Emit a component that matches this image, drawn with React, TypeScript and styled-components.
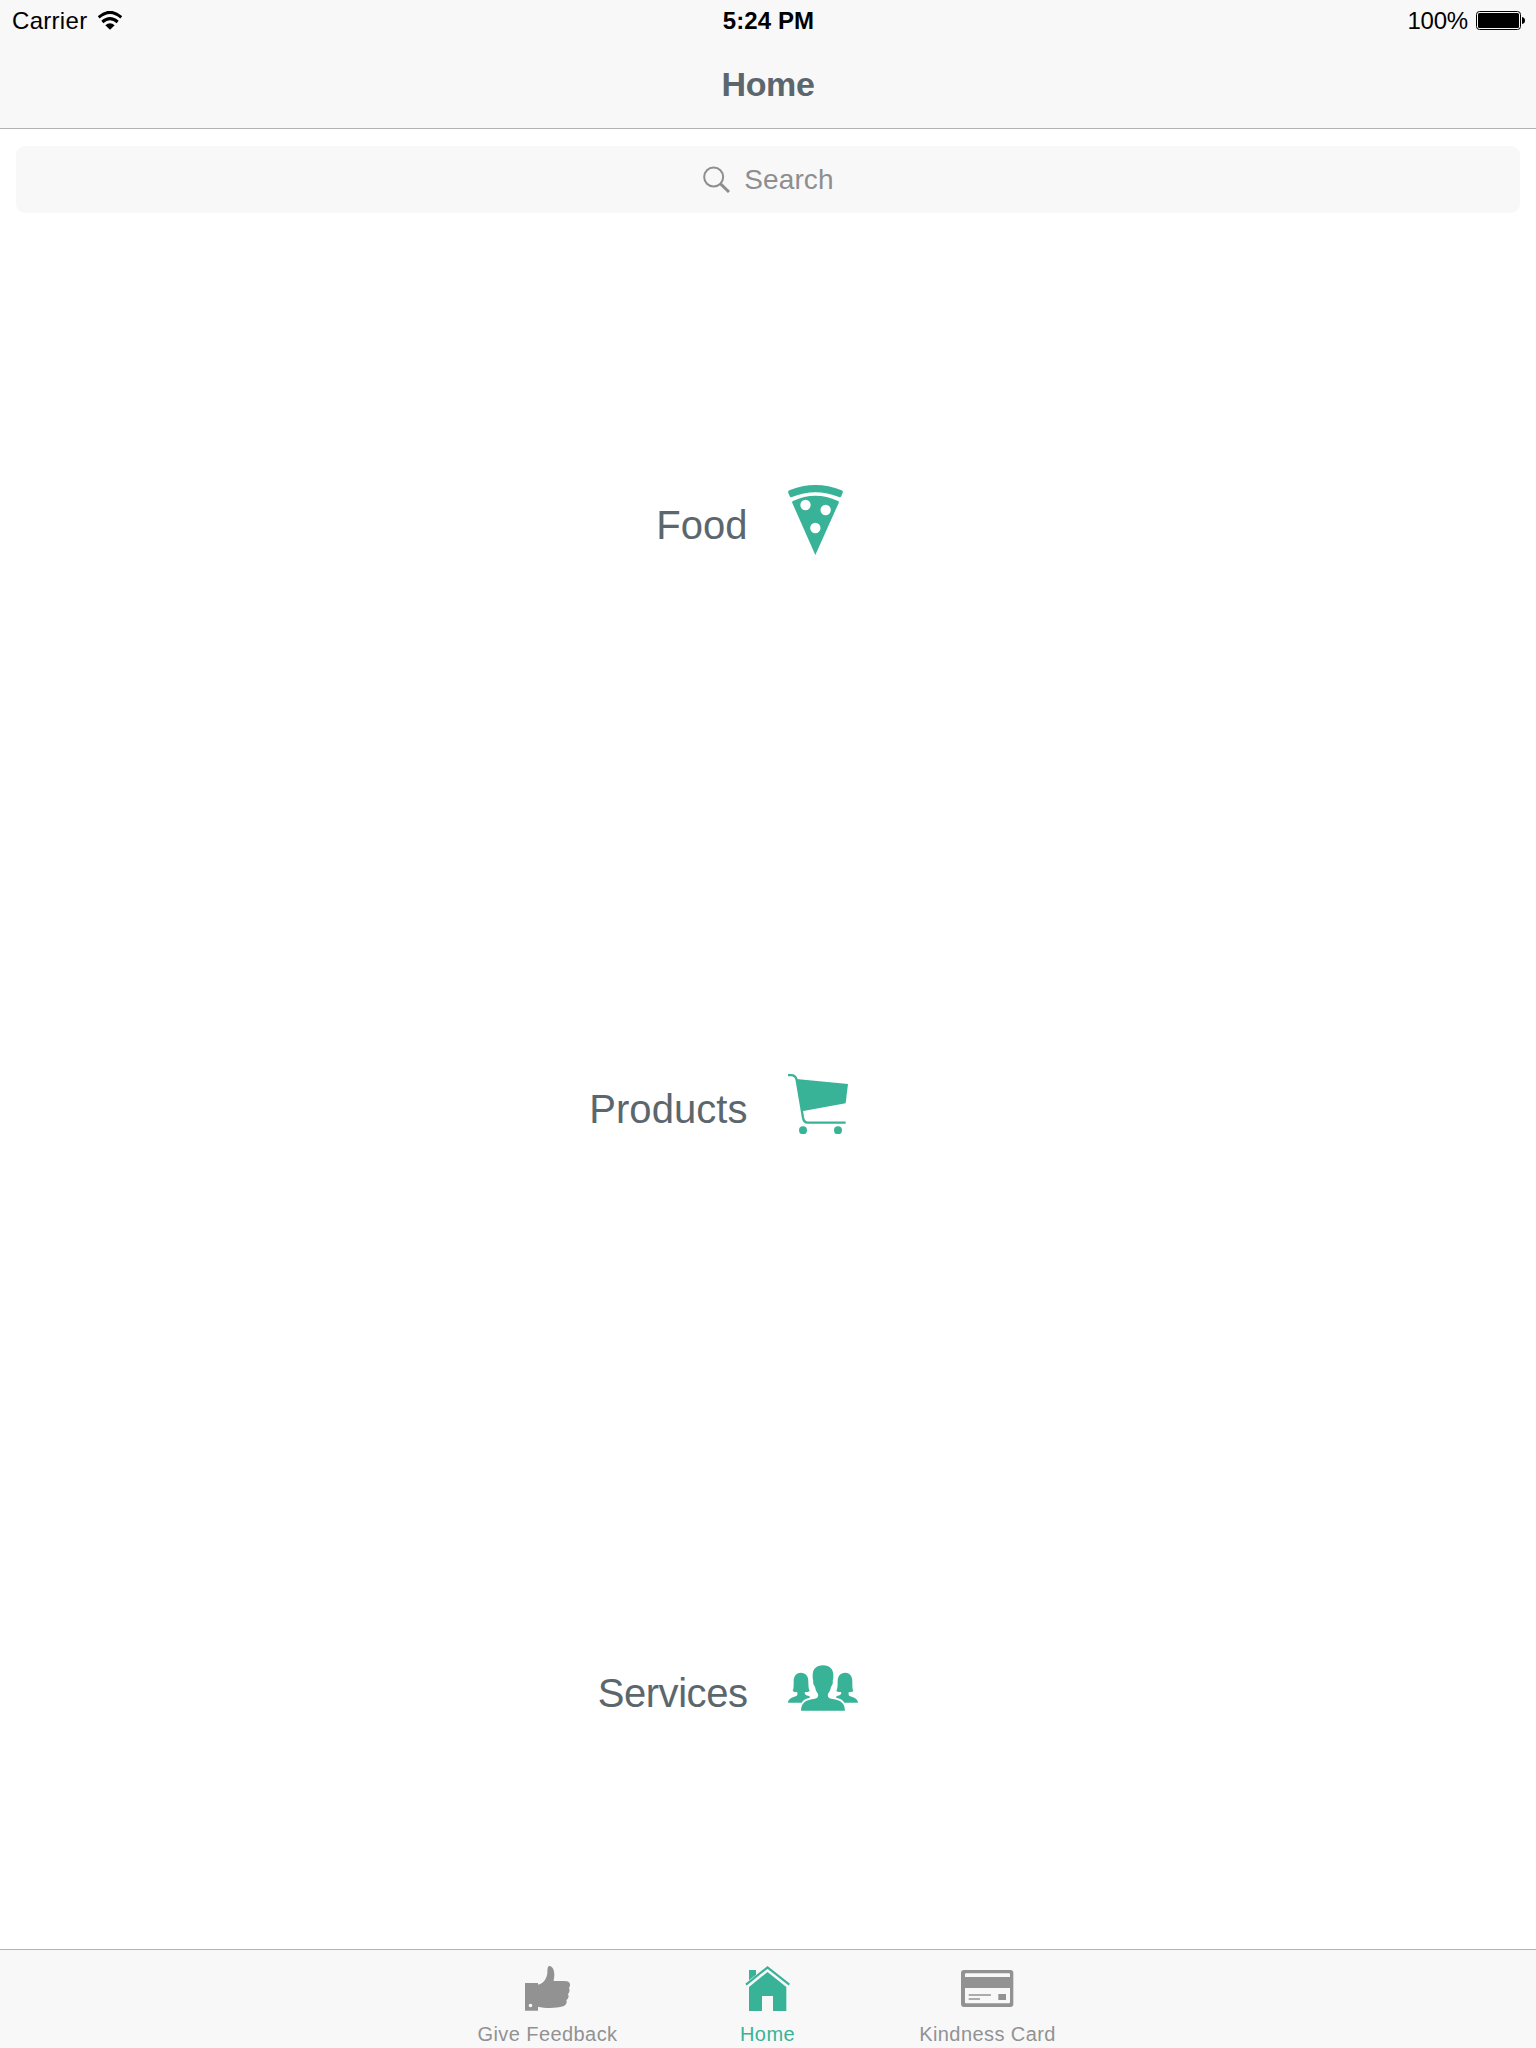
import React from "react";
import styled, { createGlobalStyle } from "styled-components";

const GREEN = "#39b397";
const GRAY = "#929292";
const SLATE = "#5b666d";
const BAR = "#f8f8f8";
const LINE = "#b2b2b2";

const GlobalStyle = createGlobalStyle`
  body {
    margin: 0;
    background: #fff;
    font-family: "Liberation Sans", Arial, Helvetica, sans-serif;
  }
`;

const Screen = styled.div`
  display: flex;
  flex-direction: column;
  width: 1536px;
  height: 2048px;
  overflow: hidden;
  background: #fff;
`;

const Header = styled.header`
  flex: none;
  box-sizing: border-box;
  height: 129px;
  background: ${BAR};
  border-bottom: 1px solid ${LINE};
`;

const StatusBar = styled.div`
  display: grid;
  grid-template-columns: 1fr auto 1fr;
  align-items: center;
  height: 41px;
  padding: 0 11px 0 12px;
  font-size: 24px;
  line-height: 28px;
  color: #000;
`;

const StatusGroup = styled.div<{ $end?: boolean }>`
  display: flex;
  align-items: center;
  justify-content: ${(p) => (p.$end ? "flex-end" : "flex-start")};
  gap: ${(p) => (p.$end ? "8px" : "11px")};
  letter-spacing: ${(p) => (p.$end ? "-0.2px" : "0.3px")};
`;

const Time = styled.div`
  font-weight: 700;
  letter-spacing: 0.1px;
`;

const Title = styled.h1`
  display: flex;
  align-items: center;
  justify-content: center;
  height: 87px;
  margin: 0;
  font-size: 34px;
  font-weight: 700;
  letter-spacing: -0.4px;
  color: ${SLATE};
`;

const SearchSection = styled.div`
  flex: none;
  box-sizing: border-box;
  height: 99px;
  padding: 17px 16px 14px;
`;

const SearchField = styled.div`
  display: flex;
  align-items: center;
  justify-content: center;
  gap: 14px;
  height: 67px;
  padding-left: 1px;
  border-radius: 9px;
  background: ${BAR};
  color: #8e8e91;
  font-size: 28px;
  line-height: 32px;
  letter-spacing: 0.1px;
`;

const Categories = styled.main`
  flex: 1;
  min-height: 0;
  overflow: hidden;
`;

const Category = styled.div`
  display: grid;
  grid-template-columns: 748px auto;
  column-gap: 40px;
  align-items: center;
  height: 584px;
`;

const CategoryLabel = styled.div<{ $tracking: number }>`
  padding: 10px 0.5px 0 0;
  text-align: right;
  font-size: 40px;
  line-height: 46px;
  letter-spacing: ${(p) => p.$tracking}px;
  color: ${SLATE};
`;

const TabBar = styled.nav`
  flex: none;
  display: flex;
  justify-content: center;
  box-sizing: border-box;
  height: 99px;
  background: ${BAR};
  border-top: 1px solid ${LINE};
`;

const Tab = styled.div<{ $active?: boolean }>`
  display: flex;
  flex-direction: column;
  align-items: center;
  width: 220px;
  padding-top: 10px;
  color: ${(p) => (p.$active ? GREEN : GRAY)};
`;

const TabLabel = styled.span`
  margin-top: 6px;
  padding-right: 1px;
  font-size: 20px;
  line-height: 24px;
  letter-spacing: 0.42px;
`;

const Glyph = styled.svg`
  display: block;
  flex: none;
`;

const WifiIcon = () => (
  <Glyph width="24" height="19" viewBox="296 32 72 57">
    <path d="M298 51 Q332 21 366 51" fill="none" stroke="#000" strokeWidth="9" />
    <path d="M309 65 Q332 45 355 65" fill="none" stroke="#000" strokeWidth="9" />
    <path d="M318 75 Q332 63 346 75 L332 88 Z" />
  </Glyph>
);

const BatteryIcon = () => (
  <Glyph width="49" height="19" viewBox="0 0 49 19">
    <rect x="0.5" y="0.5" width="44" height="18" rx="3" fill="none" stroke="#000" />
    <rect x="2" y="2" width="41" height="15" rx="1.5" />
    <path d="M46 6 Q49 6.500 49 9.500 Q49 12.500 46 13 Z" />
  </Glyph>
);

const SearchIcon = () => (
  <Glyph width="27" height="27" viewBox="67 499 81 81" fill="none" stroke="currentColor">
    <circle cx="99" cy="532" r="28.5" strokeWidth="6" />
    <path d="M119 552 L145 577" strokeWidth="9" />
  </Glyph>
);

const PizzaIcon = () => (
  <Glyph width="55" height="70" viewBox="444 75 165 210" fill={GREEN}>
    <path d="M448 91 Q526 59 605 91 Q610 94 608 99 L604 108 Q602 113 597 111 Q526 83 456 111 Q451 113 449 108 L445 99 Q443 94 448 91 Z" />
    <path
      fillRule="evenodd"
      d="M459 123 Q526 92 594 123 Q598 125 596 129 L526 285 L457 129 Q455 125 459 123 Z M481 135 a15.5 15.5 0 1 0 31 0 a15.5 15.5 0 1 0 -31 0 Z M541.500 150 a15.500 15.500 0 1 0 31 0 a15.500 15.500 0 1 0 -31 0 Z M510.500 204 a15.500 15.500 0 1 0 31 0 a15.500 15.500 0 1 0 -31 0 Z"
    />
  </Glyph>
);

const CartIcon = () => (
  <Glyph width="60" height="60.67" viewBox="654 72 180 182" fill={GREEN}>
    <path
      d="M654 75.500 H663 C674 75.500 678 80 680 90 L699 203 Q702 218 713 218 H827"
      fill="none"
      stroke={GREEN}
      strokeWidth="7"
    />
    <path d="M679 87 L834 102 L827 160 L696 184 Z" />
    <circle cx="699" cy="241" r="12" />
    <circle cx="804" cy="241" r="12" />
  </Glyph>
);

const sidePerson =
  "M662 98 C678 98 685 109 685 124 C685 140 686 148 689 153 C685 157 679 156 675 156 C672 163 677 166 688 168 L690 173 C677 175 669 180 665 188 H624 C625 177 636 173 647 169 C654 166 653 160 651 156 C646 157 641 156 638 153 C641 147 641 140 641 124 C641 109 648 98 662 98 Z";

const PeopleIcon = () => (
  <Glyph width="70" height="46" viewBox="624 75 210 138" fill={GREEN}>
    <path d={sidePerson} />
    <path d={sidePerson} transform="translate(1458 0) scale(-1 1)" />
    <path d="M729 76 C749 76 760 88 760 105 C760 112 760 118 758 123 C760 128 757 137 753 140 C751 151 748 156 744 161 C742 171 746 175 758 177 C781 181 794 187 795 212 H663 C664 187 677 181 700 177 C712 175 716 171 714 161 C710 156 707 151 705 140 C701 137 698 128 700 123 C698 118 698 112 698 105 C698 88 709 76 729 76 Z" />
  </Glyph>
);

const ThumbIcon = () => (
  <Glyph width="60" height="56" viewBox="174 60 180 168" fill="currentColor">
    <path
      fillRule="evenodd"
      d="M195 129 H234 V212 H195 Z M206 196.500 a5.500 5.500 0 1 0 11 0 a5.500 5.500 0 1 0 -11 0 Z"
    />
    <path d="M233 134 C249 132 258 119 262 101 C262 86 263 77 269 78 C278 79 283 91 283 104 C283 112 281 118 281 123 C295 124 305 122 320 124 C332 125 332 138 327 144 C330 150 329 158 324 162 C328 170 325 177 319 180 C322 188 318 196 309 199 C289 205 256 205 233 200 Z" />
  </Glyph>
);

const HomeIcon = () => (
  <Glyph width="60" height="56" viewBox="114 60 180 168" fill="currentColor">
    <path d="M147 90 H168 V104 L147 121 Z" />
    <path d="M138 134 L202.500 82 L268 134" fill="none" stroke="currentColor" strokeWidth="6.500" />
    <path d="M202.500 96 L259 141 V213 H219 V168 H186 V213 H147 V141 Z" />
  </Glyph>
);

const CardIcon = () => (
  <Glyph width="60" height="56" viewBox="174 60 180 168" fill="currentColor">
    <path
      fillRule="evenodd"
      d="M192 90 H331 Q340 90 340 99 V192 Q340 201 331 201 H192 Q183 201 183 192 V99 Q183 90 192 90 Z M198 100 Q195 100 195 103 V111 H330 V103 Q330 100 327 100 Z M195 144 V187 Q195 190 198 190 H327 Q330 190 330 187 V144 Z"
    />
    <path d="M206 162.500 H273 V167 H206 Z M206 174.500 H240 V179.500 H206 Z M295 162 H318 V180 H295 Z" />
  </Glyph>
);

const categories = [
  { label: "Food", Icon: PizzaIcon, tracking: 0 },
  { label: "Products", Icon: CartIcon, tracking: 0.05 },
  { label: "Services", Icon: PeopleIcon, tracking: -0.45 },
];

const tabs = [
  { label: "Give Feedback", Icon: ThumbIcon, active: false },
  { label: "Home", Icon: HomeIcon, active: true },
  { label: "Kindness Card", Icon: CardIcon, active: false },
];

export default function App() {
  return (
    <>
      <GlobalStyle />
      <Screen>
        <Header>
          <StatusBar>
            <StatusGroup>
              <span>Carrier</span>
              <WifiIcon />
            </StatusGroup>
            <Time>5:24 PM</Time>
            <StatusGroup $end>
              <span>100%</span>
              <BatteryIcon />
            </StatusGroup>
          </StatusBar>
          <Title>Home</Title>
        </Header>
        <SearchSection>
          <SearchField>
            <SearchIcon />
            <span>Search</span>
          </SearchField>
        </SearchSection>
        <Categories>
          {categories.map(({ label, Icon, tracking }) => (
            <Category key={label}>
              <CategoryLabel $tracking={tracking}>{label}</CategoryLabel>
              <Icon />
            </Category>
          ))}
        </Categories>
        <TabBar>
          {tabs.map(({ label, Icon, active }) => (
            <Tab key={label} $active={active}>
              <Icon />
              <TabLabel>{label}</TabLabel>
            </Tab>
          ))}
        </TabBar>
      </Screen>
    </>
  );
}
